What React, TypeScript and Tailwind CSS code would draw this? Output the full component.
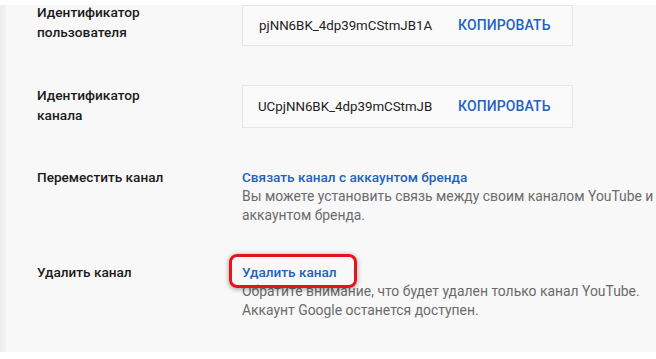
export default function App() {
  const font = { fontFamily: 'Roboto, "Noto Sans", sans-serif' }

  return (
    <div className="w-[656px] h-[359px] bg-white overflow-hidden pt-[5px]" style={font}>
      <div className="flex h-[347px] bg-[#f8f8f8]">
        {/* left shadow strip */}
        <div className="w-[6px] bg-gradient-to-r from-[#ececec] to-[#f3f3f3]" />

        <div className="flex-1 pl-[31px] text-[14px] text-[#1b1b1b]">
          {/* user id */}
          <div className="flex">
            <div className="w-[205px] -mt-[3px] leading-[20px] font-medium text-[13.7px]">
              Идентификатор
              <br />
              пользователя
            </div>
            <div className="flex items-center w-[331px] h-[41px] bg-[#fafafa] border border-[#e6e6e6] pl-[16px]">
              <span className="w-[199px] text-[#222] text-[13.3px]">pjNN6BK_4dp39mCStmJB1A</span>
              <span className="font-medium text-[#1f63bd] tracking-[0.1px]">КОПИРОВАТЬ</span>
            </div>
          </div>

          {/* channel id */}
          <div className="flex mt-[39px]">
            <div className="w-[205px] leading-[20px] font-medium text-[13.7px]">
              Идентификатор
              <br />
              канала
            </div>
            <div className="flex items-center w-[331px] h-[43px] bg-[#fafafa] border border-[#e6e6e6] pl-[15px]">
              <span className="w-[200px] text-[#222] text-[13.3px]">UCpjNN6BK_4dp39mCStmJB</span>
              <span className="font-medium text-[#1f63bd] tracking-[0.1px]">КОПИРОВАТЬ</span>
            </div>
          </div>

          {/* move channel */}
          <div className="flex mt-[40px] leading-[19px]">
            <div className="w-[205px] shrink-0 font-medium text-[13.6px]">Переместить канал</div>
            <div className="shrink-0">
              <div className="font-medium text-[#1f63bd] text-[13.6px]">Связать канал с аккаунтом бренда</div>
              <div className="text-[#6b6b6b] text-[13.9px] w-[412px]">
                Вы можете установить связь между своим каналом YouTube и
                <br />
                аккаунтом бренда.
              </div>
            </div>
          </div>

          {/* delete channel */}
          <div className="flex mt-[38px] leading-[19px]">
            <div className="w-[205px] font-medium text-[13.6px]">Удалить канал</div>
            <div className="relative">
              <div className="font-medium text-[#1f63bd] text-[13.6px]">Удалить канал</div>
              <div className="text-[#6b6b6b] text-[13.9px]">
                Обратите внимание, что будет удален только канал YouTube.
                <br />
                Аккаунт Google останется доступен.
              </div>
              <div className="absolute left-[-13px] top-[-9px] w-[128px] h-[34px] rounded-[8px] border-[3px] border-[#e3141c] shadow-[0_1px_5px_rgba(0,0,0,0.4)]" />
            </div>
          </div>
        </div>
      </div>
    </div>
  )
}
